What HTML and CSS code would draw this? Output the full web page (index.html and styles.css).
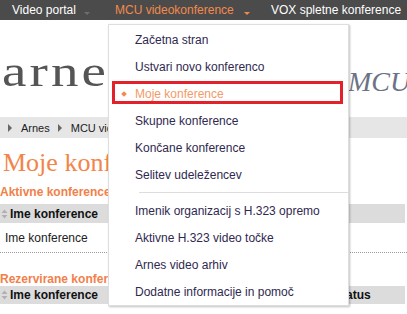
FILE: index.html
```html
<!DOCTYPE html>
<html lang="sl">
<head>
<meta charset="utf-8">
<title>Moje konference</title>
<link rel="stylesheet" href="styles.css">
</head>
<body>
<nav class="topbar">
  <div class="tm tm1"><span>Video portal</span><i class="arr"></i></div>
  <div class="tm tm2"><span>MCU videokonference</span><i class="arr arr-on"></i></div>
  <div class="tm tm3"><span>VOX spletne konference</span></div>
</nav>

<header class="head">
  <div class="logo-box"><div class="logo">arnes</div></div>
  <div class="title">MCU <span class="title-em">videokonference</span></div>
</header>

<div class="crumbs">
  <i class="tri"></i><span class="crumb">Arnes</span>
  <i class="tri"></i><span class="crumb">MCU videokonference</span>
  <i class="tri"></i><span class="crumb">Moje konference</span>
</div>

<main class="content">
  <h1 class="h1">Moje konference</h1>

  <h2 class="h2">Aktivne konference</h2>
  <div class="table">
    <div class="thead">
      <div class="th th-name"><svg class="sort" width="7" height="10" viewBox="0 0 7 10"><path d="M3.5 0.5 L6.5 4 L0.5 4 Z M3.5 9.5 L6.5 6 L0.5 6 Z" fill="#b0b0b0"/></svg>Ime konference</div>
    </div>
    <div class="trow"><div class="td">Ime konference</div></div>
  </div>

  <h2 class="h2 h2-second">Rezervirane konference</h2>
  <div class="table">
    <div class="thead thead-second">
      <div class="th th-name"><svg class="sort" width="7" height="10" viewBox="0 0 7 10"><path d="M3.5 0.5 L6.5 4 L0.5 4 Z M3.5 9.5 L6.5 6 L0.5 6 Z" fill="#b0b0b0"/></svg>Ime konference</div>
      <div class="th th-status">Status</div>
    </div>
  </div>
</main>

<div class="dropdown">
  <a class="dd-item">Začetna stran</a>
  <a class="dd-item">Ustvari novo konferenco</a>
  <a class="dd-item dd-active">Moje konference</a>
  <a class="dd-item">Skupne konference</a>
  <a class="dd-item">Končane konference</a>
  <a class="dd-item">Selitev udeležencev</a>
  <div class="dd-sep"></div>
  <a class="dd-item">Imenik organizacij s H.323 opremo</a>
  <a class="dd-item">Aktivne H.323 video točke</a>
  <a class="dd-item">Arnes video arhiv</a>
  <a class="dd-item">Dodatne informacije in pomoč</a>
</div>
</body>
</html>
```

FILE: styles.css
```css
* { box-sizing: border-box; }

html, body {
  margin: 0;
  padding: 0;
  background: #fff;
  font-family: "Liberation Sans", Arial, sans-serif;
  overflow: hidden;
}

/* top bar */
.topbar {
  display: flex;
  height: 20px;
  background: #4b4b4b;
  align-items: center;
  white-space: nowrap;
}
.tm {
  display: flex;
  align-items: center;
  font-size: 12px;
  color: #ffffff;
  flex: none;
}
.tm1 { width: 115px; padding-left: 12px; }
.tm2 { width: 156px; color: #f28a4c; }
.arr {
  display: block;
  width: 0;
  height: 0;
  border-left: 3px solid transparent;
  border-right: 3px solid transparent;
  border-top: 3px solid #6e6e6e;
  margin-left: 8px;
  margin-top: 6px;
}
.arr-on { border-top-color: #f28a4c; margin-left: 10px; }

/* header */
.head {
  display: flex;
  height: 97px;
  white-space: nowrap;
}
.logo-box {
  flex: none;
  width: 348px;
  padding-left: 2px;
  padding-top: 30px;
}
.logo {
  font-family: "Liberation Serif", "Times New Roman", serif;
  font-size: 44px;
  line-height: 44px;
  letter-spacing: 2.5px;
  color: #555555;
  transform: scaleX(1.25);
  transform-origin: left center;
}
.title {
  flex: none;
  font-family: "Liberation Serif", "Times New Roman", serif;
  font-style: italic;
  font-size: 28px;
  line-height: 28px;
  color: #6b7385;
  margin-top: 48px;
}
.title-em { color: #f2a060; }

/* breadcrumbs */
.crumbs {
  display: flex;
  align-items: center;
  height: 21px;
  background: #e6e6e6;
  font-size: 11px;
  color: #222;
  white-space: nowrap;
  padding-left: 8px;
}
.tri {
  display: block;
  width: 0;
  height: 0;
  border-top: 4px solid transparent;
  border-bottom: 4px solid transparent;
  border-left: 4px solid #666;
  margin-right: 9px;
}
.crumb { margin-right: 8px; }

/* content */
.content { width: 405px; }
.h1 {
  margin: 10px 0 0 3px;
  font-family: "Liberation Serif", "Times New Roman", serif;
  font-weight: normal;
  font-size: 26px;
  line-height: 30px;
  color: #f3844a;
  white-space: nowrap;
}
.h2 {
  margin: 7px 0 5px 0;
  font-size: 12px;
  line-height: 14px;
  font-weight: bold;
  color: #f2804a;
  white-space: nowrap;
}
.h2-second { margin-top: 19px; margin-bottom: 0; }

.thead {
  display: flex;
  align-items: center;
  height: 19px;
  background: #dcdcdc;
  font-size: 12px;
  font-weight: bold;
  color: #111;
}
.thead-second { height: 18px; }
.th { display: flex; align-items: center; white-space: nowrap; }
.th-name { width: 334px; padding-left: 1px; }
.sort { margin-right: 2px; }
.trow {
  display: flex;
  align-items: center;
  height: 30px;
  border-bottom: 1px dotted #999;
  font-size: 12px;
  color: #222;
  padding-left: 5px;
  padding-top: 1px;
  width: 407px;
}

/* dropdown menu overlay */
.dropdown {
  position: absolute;
  top: 24px;
  left: 108px;
  width: 241px;
  background: #fff;
  border: 1px solid #dedede;
  box-shadow: 1px 1px 2px rgba(0, 0, 0, 0.25);
  padding: 1px 0 0 0;
}
.dd-item {
  position: relative;
  display: flex;
  align-items: center;
  height: 27px;
  padding-left: 26px;
  font-size: 12px;
  color: #302850;
  white-space: nowrap;
  text-decoration: none;
}
.dd-active { color: #f39a68; }
.dd-active::before {
  content: "";
  position: absolute;
  left: 13px;
  top: 12px;
  width: 4px;
  height: 4px;
  background: #f28a4c;
  transform: rotate(45deg);
}
.dd-active::after {
  content: "";
  position: absolute;
  left: 3px;
  right: 5px;
  top: 1px;
  bottom: 3px;
  border: 3px solid #e3212b;
}
.dd-sep {
  height: 1px;
  background: #dddddd;
  margin: 4px 0 4px 30px;
}
```
